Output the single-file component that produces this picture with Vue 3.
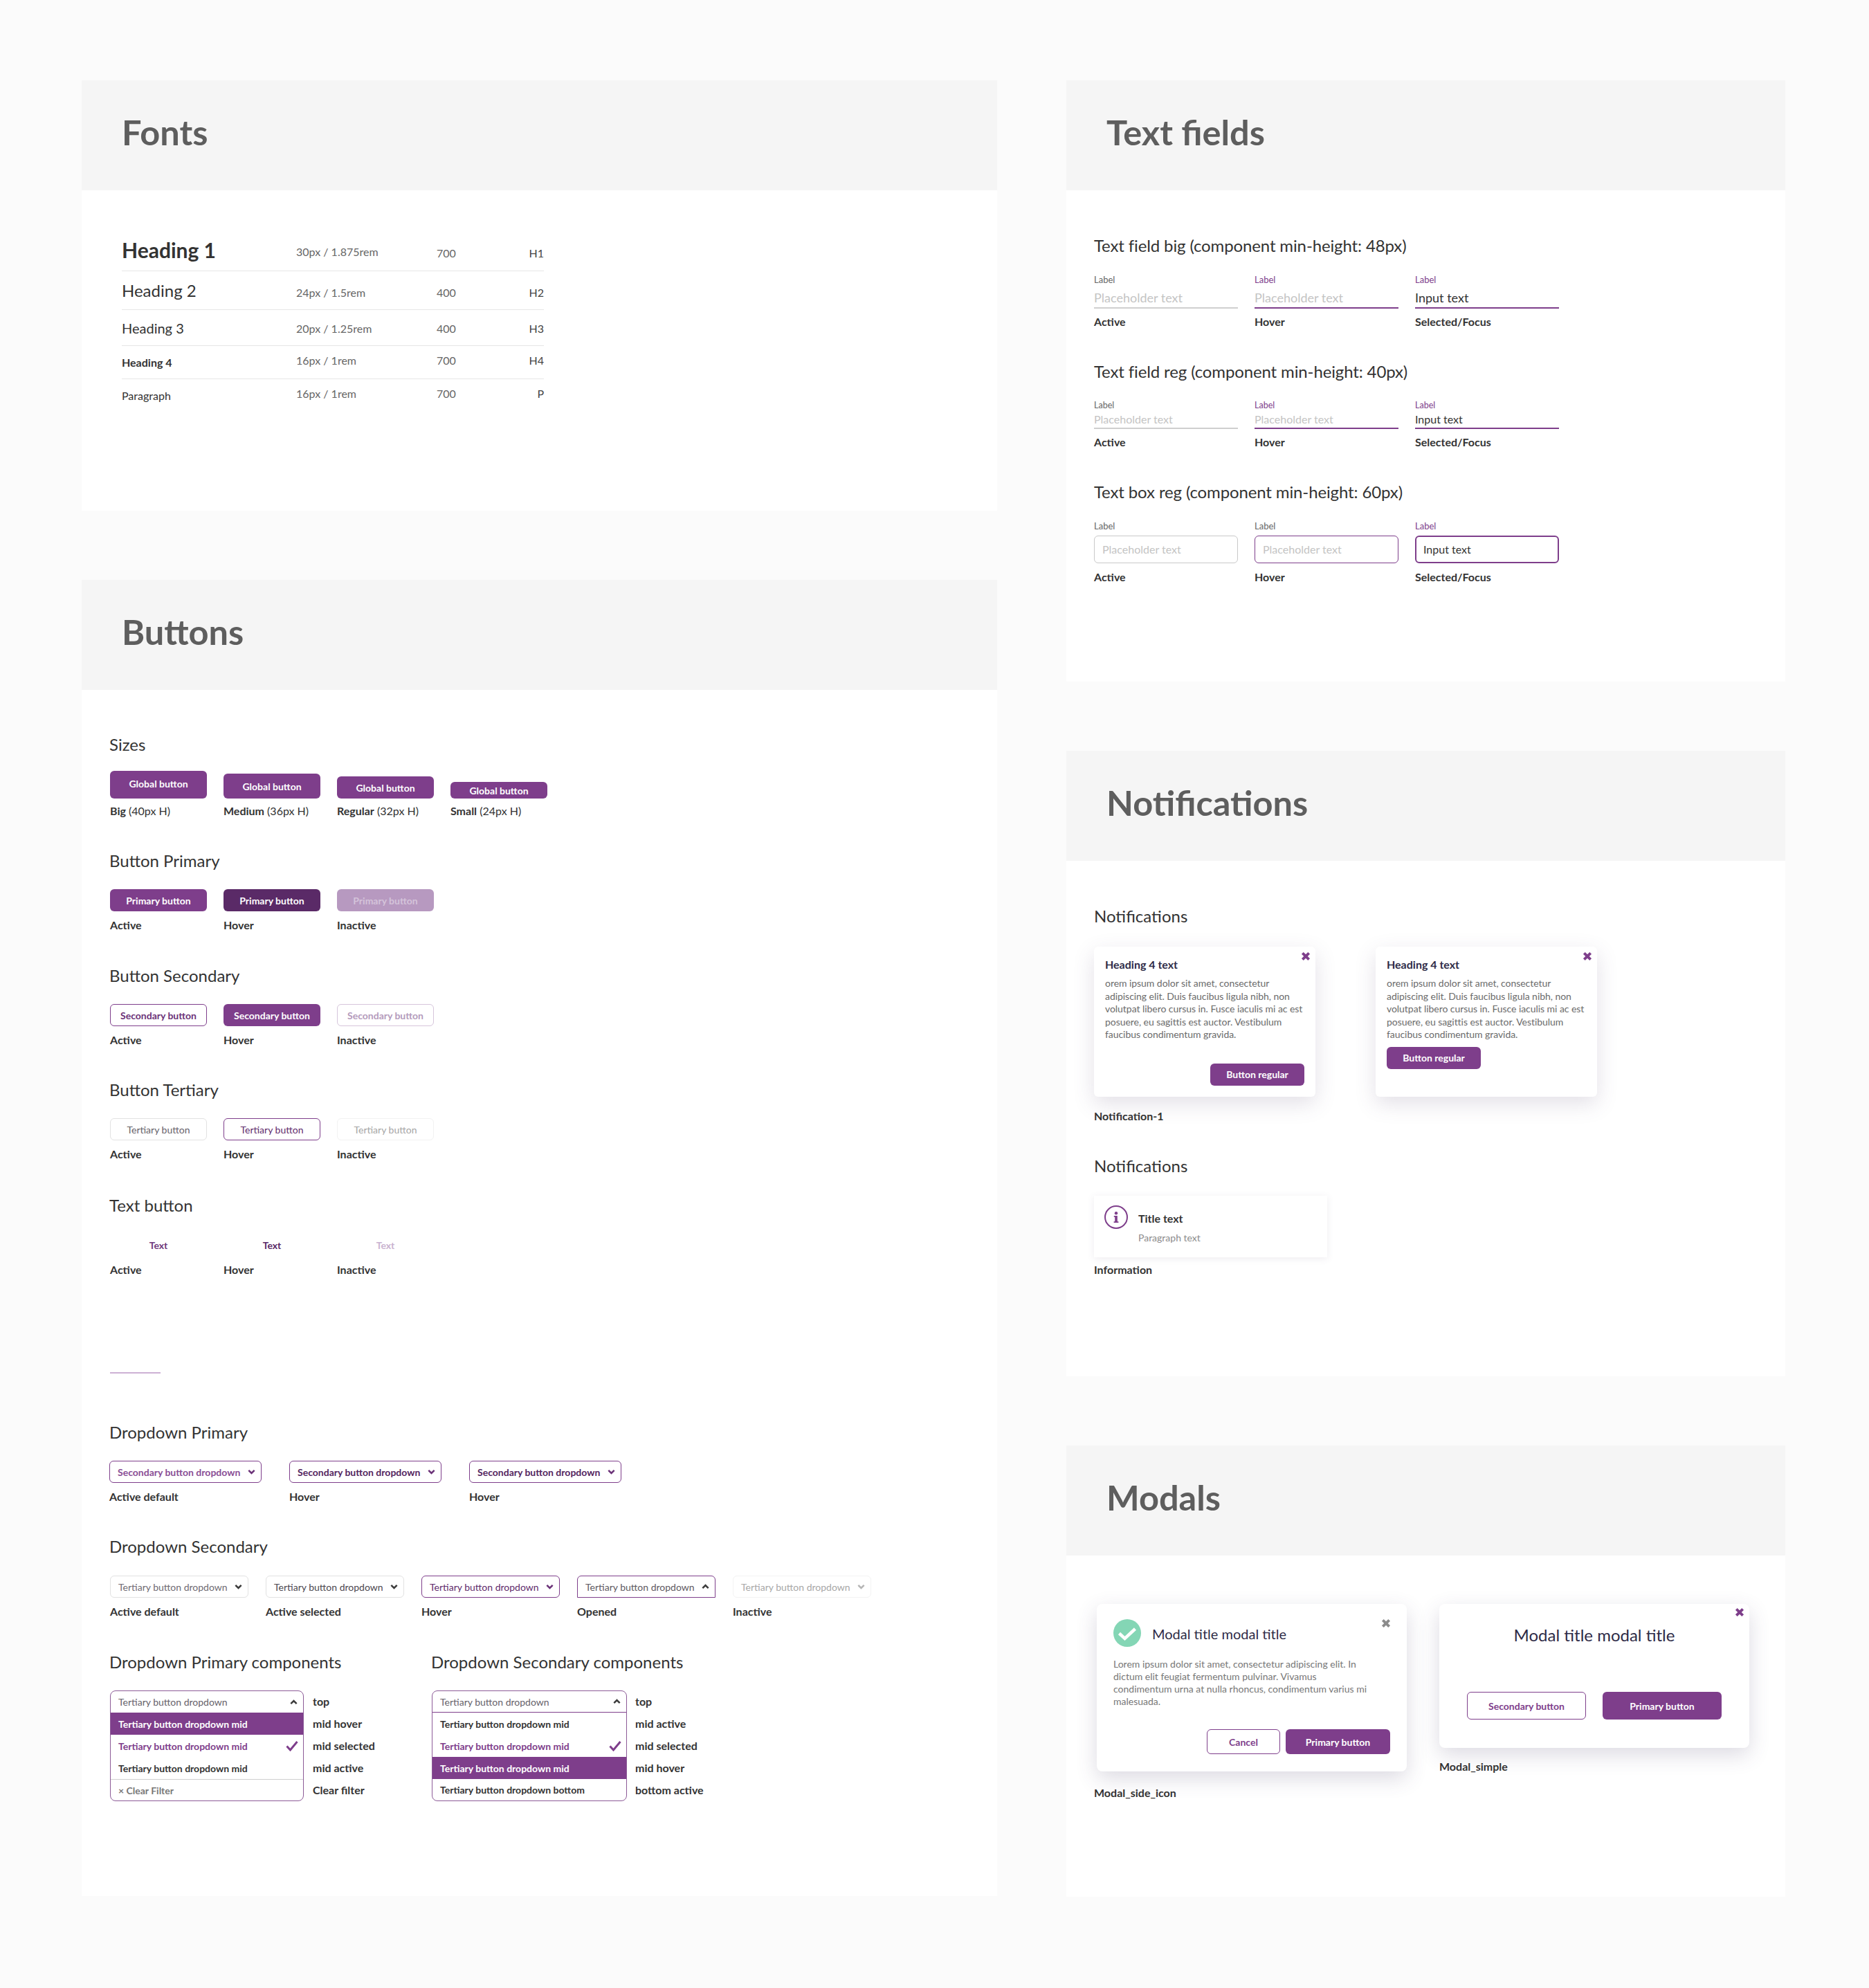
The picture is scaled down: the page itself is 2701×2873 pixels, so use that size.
<script setup>
const fontRows = [
  { name: 'Heading 1', size: '30px / 1.875rem', weight: '700', tag: 'H1', cls: 'r1' },
  { name: 'Heading 2', size: '24px / 1.5rem', weight: '400', tag: 'H2', cls: 'r2' },
  { name: 'Heading 3', size: '20px / 1.25rem', weight: '400', tag: 'H3', cls: 'r3' },
  { name: 'Heading 4', size: '16px / 1rem', weight: '700', tag: 'H4', cls: 'r4' },
  { name: 'Paragraph', size: '16px / 1rem', weight: '700', tag: 'P', cls: 'r5' }
]
const sizes = [
  { b: 'Big', r: '(40px H)', cls: 's40' },
  { b: 'Medium', r: '(36px H)', cls: 's36' },
  { b: 'Regular', r: '(32px H)', cls: 's32' },
  { b: 'Small', r: '(24px H)', cls: 's24' }
]
const states = ['Active', 'Hover', 'Inactive']
const btnGroups = [
  { title: 'Button Primary', text: 'Primary button', cls: 'pri' },
  { title: 'Button Secondary', text: 'Secondary button', cls: 'sec' },
  { title: 'Button Tertiary', text: 'Tertiary button', cls: 'ter' },
  { title: 'Text button', text: 'Text', cls: 'txt' }
]
const ddPrimary = [
  { cap: 'Active default', cls: 'a' },
  { cap: 'Hover', cls: 'b' },
  { cap: 'Hover', cls: 'b' }
]
const ddSecondary = [
  { cap: 'Active default', cls: 'a' },
  { cap: 'Active selected', cls: 'b' },
  { cap: 'Hover', cls: 'c' },
  { cap: 'Opened', cls: 'd', up: true },
  { cap: 'Inactive', cls: 'e' }
]
const listA = [
  { t: 'Tertiary button dropdown', l: 'top', cls: 'top', up: true },
  { t: 'Tertiary button dropdown mid', l: 'mid hover', cls: 'hov' },
  { t: 'Tertiary button dropdown mid', l: 'mid selected', cls: 'sel', check: true },
  { t: 'Tertiary button dropdown mid', l: 'mid active', cls: 'act' },
  { t: '× Clear Filter', l: 'Clear filter', cls: 'clr' }
]
const listB = [
  { t: 'Tertiary button dropdown', l: 'top', cls: 'top line', up: true },
  { t: 'Tertiary button dropdown mid', l: 'mid active', cls: 'act' },
  { t: 'Tertiary button dropdown mid', l: 'mid selected', cls: 'sel', check: true },
  { t: 'Tertiary button dropdown mid', l: 'mid hover', cls: 'hov' },
  { t: 'Tertiary button dropdown bottom', l: 'bottom active', cls: 'act' }
]
const lists = [
  { title: 'Dropdown Primary components', rows: listA, cls: 'la' },
  { title: 'Dropdown Secondary components', rows: listB, cls: 'lb' }
]
const fieldGroups = [
  { title: 'Text field big (component min-height: 48px)', cls: 'big' },
  { title: 'Text field reg (component min-height: 40px)', cls: 'reg' },
  { title: 'Text box reg (component min-height: 60px)', cls: 'box' }
]
const fieldStates = [
  { cap: 'Active', cls: 'active', text: 'Placeholder text' },
  { cap: 'Hover', cls: 'hover', text: 'Placeholder text' },
  { cap: 'Selected/Focus', cls: 'focus', text: 'Input text' }
]
const noteCards = ['n1', 'n2']
const lorem = 'orem ipsum dolor sit amet, consectetur adipiscing elit. Duis faucibus ligula nibh, non volutpat libero cursus in. Fusce iaculis mi ac est posuere, eu sagittis est auctor. Vestibulum faucibus condimentum gravida.'
</script>

<template>
  <div class="page">
    <div class="col col-left">
      <section class="panel fonts">
        <header class="phead"><h1>Fonts</h1></header>
        <div class="fonts-body">
          <div v-for="r in fontRows" :key="r.name" class="frow" :class="r.cls">
            <span class="fname">{{ r.name }}</span>
            <span class="fmeta fsize">{{ r.size }}</span>
            <span class="fmeta">{{ r.weight }}</span>
            <span class="fmeta ftag">{{ r.tag }}</span>
          </div>
        </div>
      </section>

      <section class="panel buttons">
        <header class="phead"><h1>Buttons</h1></header>
        <div class="buttons-body">
          <h2 class="gtitle">Sizes</h2>
          <div class="brow sizes">
            <div v-for="s in sizes" :key="s.b" class="bcell">
              <div class="btnslot"><span class="btn pri-0" :class="s.cls">Global button</span></div>
              <div class="cap size-cap"><b>{{ s.b }}</b> {{ s.r }}</div>
            </div>
          </div>
          <div v-for="g in btnGroups" :key="g.title" class="bgroup" :class="'g-' + g.cls">
            <h2 class="gtitle">{{ g.title }}</h2>
            <div class="brow">
              <div v-for="(st, i) in states" :key="st" class="bcell">
                <span class="btn s32" :class="[g.cls, g.cls + '-' + i]">{{ g.text }}</span>
                <div class="cap">{{ st }}</div>
              </div>
            </div>
          </div>
          <div class="rule"></div>

          <h2 class="gtitle">Dropdown Primary</h2>
          <div class="ddrow ddp">
            <div v-for="(d, i) in ddPrimary" :key="i" class="ddcell">
              <div class="dd wide" :class="'p-' + d.cls">
                <span>Secondary button dropdown</span>
                <svg class="chev" viewBox="0 0 10 7"><path d="M1.2 1.5 5 5.2 8.8 1.5" /></svg>
              </div>
              <div class="cap">{{ d.cap }}</div>
            </div>
          </div>

          <div class="bgroup">
            <h2 class="gtitle">Dropdown Secondary</h2>
            <div class="ddrow dds">
              <div v-for="d in ddSecondary" :key="d.cap" class="ddcell">
                <div class="dd narrow" :class="'t-' + d.cls">
                  <span>Tertiary button dropdown</span>
                  <svg class="chev" viewBox="0 0 10 7"><path :d="d.up ? 'M1.2 5.5 5 1.8 8.8 5.5' : 'M1.2 1.5 5 5.2 8.8 1.5'" /></svg>
                </div>
                <div class="cap">{{ d.cap }}</div>
              </div>
            </div>
          </div>

          <div class="lists">
            <div v-for="l in lists" :key="l.title" class="listcol" :class="l.cls">
              <h2 class="gtitle">{{ l.title }}</h2>
              <div class="listwrap">
                <div class="menu">
                  <div v-for="(row, i) in l.rows" :key="i" class="mrow" :class="row.cls">
                    <span>{{ row.t }}</span>
                    <svg v-if="row.up" class="chev dark" viewBox="0 0 10 7"><path d="M1.2 5.5 5 1.8 8.8 5.5" /></svg>
                    <svg v-if="row.check" class="check" viewBox="0 0 18 16"><path d="M1.5 8.5 6.5 14 16.5 2" /></svg>
                  </div>
                </div>
                <div class="mlabels">
                  <div v-for="(row, i) in l.rows" :key="i" class="mlabel">{{ row.l }}</div>
                </div>
              </div>
            </div>
          </div>
        </div>
      </section>
    </div>

    <div class="col col-right">
      <section class="panel textfields">
        <header class="phead"><h1>Text fields</h1></header>
        <div class="tf-body">
          <div v-for="f in fieldGroups" :key="f.title" class="tfgroup" :class="f.cls">
            <h2 class="gtitle">{{ f.title }}</h2>
            <div class="tfrow">
              <div v-for="s in fieldStates" :key="s.cls" class="tfcell" :class="s.cls">
                <div class="tflabel">Label</div>
                <div class="tfinput">{{ s.text }}</div>
                <div class="cap">{{ s.cap }}</div>
              </div>
            </div>
          </div>
        </div>
      </section>

      <section class="panel notifications">
        <header class="phead"><h1>Notifications</h1></header>
        <div class="nt-body">
          <h2 class="gtitle">Notifications</h2>
          <div class="ncards">
            <div v-for="n in noteCards" :key="n" class="ncard" :class="n">
              <svg class="x purple nx" viewBox="0 0 12 12"><path d="M2 2 10 10M10 2 2 10" /></svg>
              <div class="ntitle">Heading 4 text</div>
              <p class="ntext">{{ lorem }}</p>
              <div class="nbtn"><span class="btn pri-0 regbtn">Button regular</span></div>
            </div>
          </div>
          <div class="cap ncap">Notification-1</div>
          <h2 class="gtitle second">Notifications</h2>
          <div class="info">
            <svg class="infoicon" viewBox="0 0 34 34">
              <circle class="ring" cx="17" cy="17" r="16" />
              <circle class="dot" cx="17" cy="11.2" r="2.2" />
              <path class="dot" d="M13.8 15h5v8.2h1.6V25h-6.8v-1.8h1.6v-6.4h-1.4z" />
            </svg>
            <div>
              <div class="ititle">Title text</div>
              <div class="itext">Paragraph text</div>
            </div>
          </div>
          <div class="cap icap">Information</div>
        </div>
      </section>

      <section class="panel modals">
        <header class="phead"><h1>Modals</h1></header>
        <div class="md-body">
          <div class="mdcol first">
            <div class="modal side">
              <svg class="x gray mx" viewBox="0 0 12 12"><path d="M2 2 10 10M10 2 2 10" /></svg>
              <div class="mdhead">
                <svg class="okicon" viewBox="0 0 40 40">
                  <circle cx="20" cy="20" r="20" />
                  <path d="M8.5 20.5 16.5 28 31.5 14" />
                </svg>
                <span>Modal title modal title</span>
              </div>
              <p class="mdtext">Lorem ipsum dolor sit amet, consectetur adipiscing elit. In dictum elit feugiat fermentum pulvinar. Vivamus condimentum urna at nulla rhoncus, condimentum varius mi malesuada.</p>
              <div class="mdacts">
                <span class="btn mdbtn outline cancel">Cancel</span>
                <span class="btn mdbtn pri-0 prim">Primary button</span>
              </div>
            </div>
            <div class="cap mdcap">Modal_side_icon</div>
          </div>
          <div class="mdcol">
            <div class="modal simple">
              <svg class="x purple sx" viewBox="0 0 12 12"><path d="M2 2 10 10M10 2 2 10" /></svg>
              <div class="mdsimple-title">Modal title modal title</div>
              <div class="mdacts2">
                <span class="btn big2 outline">Secondary button</span>
                <span class="btn big2 pri-0">Primary button</span>
              </div>
            </div>
            <div class="cap mdcap simplecap">Modal_simple</div>
          </div>
        </div>
      </section>
    </div>
  </div>
</template>

<style>
html, body { margin: 0; background: #fbfbfb; }
</style>

<style scoped>
.page {
  display: flex;
  gap: 100px;
  padding: 116px 121px 133px 118px;
  width: 2701px;
  box-sizing: border-box;
  font-family: Lato, "Liberation Sans", sans-serif;
  color: #333;
  background: #fbfbfb;
}
.col { display: flex; flex-direction: column; gap: 100px; }
.col-left { width: 1323px; }
.col-right { width: 1039px; }
.panel { background: #fff; }
.phead {
  height: 159px;
  box-sizing: border-box;
  background: #f5f5f5;
  padding: 0 0 10px 58px;
  display: flex;
  align-items: center;
}
.phead h1 { margin: 0; font-size: 50.5px; line-height: 60px; font-weight: 700; color: #5e5e5e; }
.gtitle { margin: 0; font-size: 24px; line-height: 32px; height: 32px; font-weight: 400; color: #333; white-space: nowrap; }
.cap { font-size: 16px; line-height: 20px; font-weight: 700; color: #333; margin-top: 10px; white-space: nowrap; }

/* Fonts */
.fonts { height: 622px; }
.fonts-body { padding: 61px 0 0 58px; width: 610px; }
.frow {
  display: grid;
  grid-template-columns: 252px 203px 1fr auto;
  align-items: center;
  border-bottom: 1px solid #e6e6e6;
  color: #333;
}
.frow:last-child { border-bottom: 0; }
.fname { white-space: nowrap; }
.fmeta { font-size: 16px; color: #666; line-height: 20px; }
.ftag { color: #444; }
.r1 { height: 55px; }
.r1 .fname { font-size: 30px; font-weight: 700; line-height: 36px; padding-bottom: 6px; }
.r1 .fmeta { padding-top: 5px; }
.r1 .fsize { padding-top: 1px; }
.r2 { height: 55px; }
.r2 .fname { font-size: 24px; line-height: 30px; }
.r2 .fmeta { padding-top: 6px; }
.r3 { height: 51px; }
.r3 .fname { font-size: 20px; line-height: 26px; padding-top: 1px; }
.r3 .fmeta { padding-top: 3px; }
.r4 { height: 47px; }
.r4 .fname { font-size: 16px; font-weight: 700; line-height: 20px; }
.r4 .fmeta { padding-bottom: 6px; }
.r5 { height: 48px; }
.r5 .fname { font-size: 16px; line-height: 20px; }
.r5 .fmeta { padding-bottom: 6px; }

/* Buttons */
.buttons { height: 1902px; }
.buttons-body { padding: 63px 0 0 40px; }
.btn {
  display: flex;
  align-items: center;
  justify-content: center;
  box-sizing: border-box;
  width: 140px;
  border-radius: 6px;
  font-size: 14px;
  font-weight: 700;
  white-space: nowrap;
}
.brow { display: flex; gap: 24px; margin: 25px 0 0 1px; }
.brow.sizes { margin-top: 22px; }
.bcell { width: 140px; }
.btnslot { height: 40px; display: flex; align-items: flex-end; }
.size-cap { margin-top: 8px; font-weight: 400; }
.size-cap b { font-weight: 700; }
.s40 { height: 40px; padding-bottom: 3px; }
.s36 { height: 36px; }
.s32 { height: 32px; }
.s24 { height: 24px; padding-top: 1px; }
.pri-0 { background: #7e3e8b; color: #fff; }
.pri-1 { background: #5a2a67; color: #fff; }
.pri-2 { background: #b799c0; color: #d4c3da; }
.sec-0 { border: 1px solid #7e3e8b; color: #6b3278; background: #fff; }
.sec-1 { background: #7e3e8b; color: #fff; }
.sec-2 { border: 1px solid #d6c5db; color: #b49bbc; background: #fff; }
.ter { font-weight: 400; }
.ter-0 { border: 1px solid #e2e2e2; color: #66626a; }
.ter-1 { border: 1px solid #7e3e8b; color: #5f2c6c; }
.ter-2 { border: 1px solid #f2f2f2; color: #a5a5a5; }
.txt-0 { color: #6f3a7c; }
.txt-1 { color: #5a2a67; }
.txt-2 { color: #c9b3d0; }
.bgroup { margin-top: 46px; }
.bgroup.g-sec { margin-top: 47px; }
.bgroup.g-txt { margin-top: 48px; }
.rule { width: 73px; height: 2px; background: #cdb1d4; margin: 138px 0 69px 1px; }

.ddrow { display: flex; margin-top: 25px; }
.ddp { gap: 40px; }
.dds { gap: 25px; margin: 26px 0 0 1px; }
.dd {
  box-sizing: border-box;
  height: 32px;
  border-radius: 6px;
  padding: 0 8px 0 11px;
  display: flex;
  align-items: center;
  justify-content: space-between;
  font-size: 14px;
  white-space: nowrap;
}
.wide { width: 220px; font-weight: 700; border: 1px solid #7e3e8b; }
.narrow { width: 200px; border: 1px solid #e2e2e2; color: #6a666e; }
.p-a { color: #8a4f96; }
.p-b { color: #54265f; }
.t-a { color: #6f6b73; }
.t-b { color: #4c4850; }
.t-c { border-color: #7e3e8b; color: #5f2c6c; }
.t-d { border-color: #7e3e8b; color: #5e5a62; border-radius: 6px 6px 0 0; }
.t-e { border-color: #f3f3f3; color: #a8a8a8; }
.chev { width: 11px; height: 8px; flex: none; fill: none; stroke: #6b3278; stroke-width: 2.3; }
.t-a .chev, .t-b .chev, .t-d .chev, .chev.dark { stroke: #3c3c3c; }
.t-e .chev { stroke: #b5b5b5; }

.lists { display: flex; margin-top: 47px; }
.listcol.la { width: 465px; }
.listwrap { display: flex; margin: 25px 0 0 1px; }
.menu {
  width: 280px;
  box-sizing: border-box;
  border: 1px solid #8c5a97;
  border-radius: 8px;
  overflow: hidden;
}
.lb .menu { width: 282px; }
.mrow {
  height: 32px;
  padding: 0 8px 0 11px;
  display: flex;
  align-items: center;
  justify-content: space-between;
  font-size: 14px;
  font-weight: 700;
  white-space: nowrap;
}
.mrow:first-child { height: 31px; }
.mrow:last-child { height: 31px; }
.top { font-weight: 400; color: #66626a; }
.top.line { border-bottom: 1px solid #7e3e8b; box-sizing: border-box; }
.hov { background: #7e3e8b; color: #fff; }
.sel { color: #7e3e8b; }
.act { color: #333; }
.clr { color: #777; border-top: 1px solid #cfcfcf; box-sizing: border-box; }
.check { width: 18px; height: 16px; fill: none; stroke: #7e3e8b; stroke-width: 3; margin-right: -1px; }
.mlabels { margin-left: 13px; }
.lb .mlabels { margin-left: 12px; }
.mlabel { font-size: 16px; font-weight: 700; line-height: 32px; color: #333; white-space: nowrap; }

/* Text fields */
.textfields { height: 869px; }
.tf-body { padding: 64px 0 0 40px; }
.tfgroup + .tfgroup { margin-top: 46px; }
.tfgroup .gtitle { letter-spacing: -0.13px; }
.tfrow { display: flex; gap: 24px; margin-top: 25px; }
.tfcell { width: 208px; }
.tflabel { font-size: 13px; line-height: 16px; color: #666; }
.tfinput { color: #c4c4c4; white-space: nowrap; box-sizing: border-box; }
.big .tfinput { font-size: 18px; line-height: 25px; padding-bottom: 1px; margin-top: 6px; border-bottom: 2px solid #cfcfcf; }
.reg .tfinput { font-size: 16px; line-height: 24px; border-bottom: 2px solid #cfcfcf; }
.reg .tflabel { font-size: 12.5px; }
.reg .cap, .big .cap { margin-top: 9px; }
.box .tfinput {
  height: 40px;
  margin-top: 6px;
  border: 1px solid #c9c9c9;
  border-radius: 6px;
  padding-left: 11px;
  font-size: 16px;
  line-height: 38px;
}
.hover .tflabel, .focus .tflabel { color: #7e3e8b; }
.box .hover .tflabel { color: #666; }
.big .hover .tfinput, .reg .hover .tfinput, .big .focus .tfinput, .reg .focus .tfinput { border-bottom-color: #7e3e8b; }
.focus .tfinput { color: #333; }
.box .hover .tfinput { border-color: #7e3e8b; }
.box .focus .tfinput { border: 2px solid #7e3e8b; padding-left: 10px; line-height: 36px; }

/* Notifications */
.notifications { height: 904px; }
.nt-body { padding: 64px 0 0 40px; }
.ncards { display: flex; gap: 87px; margin-top: 28px; }
.ncard {
  position: relative;
  width: 320px;
  height: 217px;
  box-sizing: border-box;
  padding: 16px 16px 0;
  background: #fff;
  border-radius: 6px;
  box-shadow: 0 10px 30px rgba(90, 70, 110, .17);
  display: flex;
  flex-direction: column;
}
.x { width: 14px; height: 14px; fill: none; stroke-width: 3.4; position: absolute; }
.x.purple { stroke: #7e3e8b; }
.x.gray { stroke: #8c8c8c; }
.nx { top: 7px; right: 7px; }
.ntitle { font-size: 16px; line-height: 20px; font-weight: 700; color: #2e2b47; }
.ntext { margin: 8px 0 0; font-size: 14px; line-height: 18.5px; color: #6b6b6b; letter-spacing: -0.05px; }
.nbtn { display: flex; }
.n1 .nbtn { justify-content: flex-end; margin-top: 32px; }
.n2 .nbtn { margin-top: 8px; }
.regbtn { width: 136px; height: 32px; }
.ncap { margin-top: 18px; }
.gtitle.second { margin-top: 46px; }
.info {
  width: 337px;
  height: 89px;
  box-sizing: border-box;
  margin-top: 27px;
  padding: 14px 0 0 15px;
  display: flex;
  gap: 15px;
  box-shadow: 0 2px 10px rgba(90, 70, 110, .1);
}
.infoicon { width: 34px; height: 34px; flex: none; }
.ring { fill: none; stroke: #7e3e8b; stroke-width: 2; }
.dot { fill: #7e3e8b; }
.ititle { font-size: 16px; line-height: 20px; font-weight: 700; color: #333; margin-top: 9px; }
.itext { font-size: 14px; line-height: 18px; color: #8c8c8c; margin-top: 9px; }
.icap { margin-top: 8px; }

/* Modals */
.modals { height: 652px; }
.md-body { padding: 70px 0 0 40px; display: flex; }
.mdcol.first { width: 499px; }
.modal {
  position: relative;
  width: 448px;
  box-sizing: border-box;
  background: #fff;
  border-radius: 8px;
  box-shadow: 0 10px 30px rgba(70, 60, 100, .19);
}
.side { margin-left: 4px; height: 242px; padding: 22px 24px 0; }
.simple { height: 208px; }
.mx { top: 21px; right: 23px; }
.sx { top: 5px; right: 7px; }
.mdhead { display: flex; align-items: center; gap: 16px; font-size: 20px; color: #2e2b47; }
.okicon { width: 40px; height: 40px; }
.okicon circle { fill: #84d6b5; }
.okicon path { fill: none; stroke: #fff; stroke-width: 4.5; }
.mdhead span { padding-top: 2px; }
.mdtext { margin: 16px 0 0; font-size: 14px; line-height: 18px; color: #777; width: 370px; }
.mdacts { display: flex; justify-content: flex-end; gap: 8px; position: absolute; right: 24px; bottom: 25px; }
.mdbtn { height: 36px; }
.cancel { width: 106px; }
.prim { width: 151px; }
.outline { border: 1px solid #7e3e8b; color: #7e3e8b; background: #fff; }
.mdcap { margin-top: 21px; }
.simplecap { margin-top: 17px; }
.mdsimple-title { text-align: center; font-size: 24px; line-height: 32px; color: #2e2b47; padding: 29px 0 0; }
.mdacts2 { display: flex; justify-content: center; gap: 24px; margin-top: 66px; }
.big2 { width: 172px; height: 40px; }
</style>
